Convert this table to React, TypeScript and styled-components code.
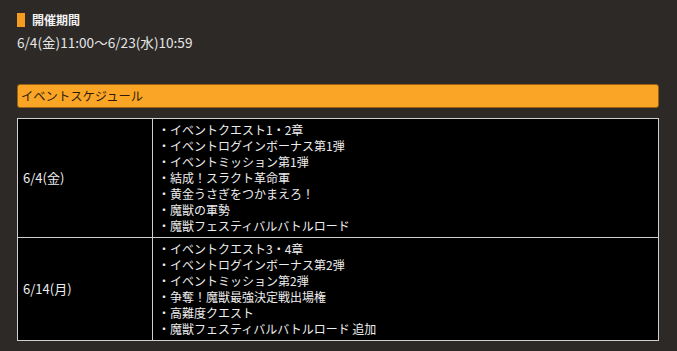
import React from "react";
import styled, { createGlobalStyle } from "styled-components";

const Global = createGlobalStyle`
  html, body { margin: 0; padding: 0; background: #2c2927; }
  body {
    font-family: "Noto Sans CJK JP", "Noto Sans", sans-serif;
    color: #ececec;
    width: 677px;
    height: 351px;
    overflow: hidden;
  }
`;

const Page = styled.div`
  padding: 12px 18px 0 17px;
  display: flex;
  flex-direction: column;
`;

const Heading = styled.h3`
  margin: 0;
  display: flex;
  align-items: center;
  gap: 7px;
  font-size: 12px;
  line-height: 16px;
  font-weight: 700;
  color: #f2f2f2;
  &::before {
    content: "";
    display: block;
    width: 8px;
    height: 14px;
    background: #f39c1f;
  }
`;

const Period = styled.p`
  margin: 5px 0 0;
  font-size: 13.6px;
  line-height: 18px;
  color: #e6e6e6;
`;

const SectionBar = styled.h4`
  margin: 33px 0 0;
  height: 24px;
  box-sizing: border-box;
  display: flex;
  align-items: center;
  padding: 0 3px;
  background: #fba526;
  border: 1px solid #9a6210;
  border-radius: 3px;
  font-size: 12.3px;
  font-weight: 400;
  color: #2a1c08;
`;

const Table = styled.table`
  margin-top: 10px;
  width: 100%;
  border-collapse: collapse;
  background: #000;
  font-size: 12px;
  line-height: 16px;
  color: #ededed;
`;

const Cell = styled.td<{ $first?: boolean }>`
  border: 1px solid #cfcfcf;
  padding: 3px 5px;
  vertical-align: middle;
  width: ${(p) => (p.$first ? "124px" : "auto")};
`;

const DateText = styled.span`
  font-size: 13px;
`;

const Line = styled.div``;

const rows = [
  {
    date: "6/4(金)",
    items: [
      "イベントクエスト1・2章",
      "イベントログインボーナス第1弾",
      "イベントミッション第1弾",
      "結成！スラクト革命軍",
      "黄金うさぎをつかまえろ！",
      "魔獣の軍勢",
      "魔獣フェスティバルバトルロード",
    ],
  },
  {
    date: "6/14(月)",
    items: [
      "イベントクエスト3・4章",
      "イベントログインボーナス第2弾",
      "イベントミッション第2弾",
      "争奪！魔獣最強決定戦出場権",
      "高難度クエスト",
      "魔獣フェスティバルバトルロード 追加",
    ],
  },
];

export default function App() {
  return (
    <>
      <Global />
      <Page>
        <Heading>開催期間</Heading>
        <Period>6/4(金)11:00～6/23(水)10:59</Period>
        <SectionBar>イベントスケジュール</SectionBar>
        <Table>
          <tbody>
            {rows.map((r) => (
              <tr key={r.date}>
                <Cell $first>
                  <DateText>{r.date}</DateText>
                </Cell>
                <Cell>
                  {r.items.map((it) => (
                    <Line key={it}>・{it}</Line>
                  ))}
                </Cell>
              </tr>
            ))}
          </tbody>
        </Table>
      </Page>
    </>
  );
}
